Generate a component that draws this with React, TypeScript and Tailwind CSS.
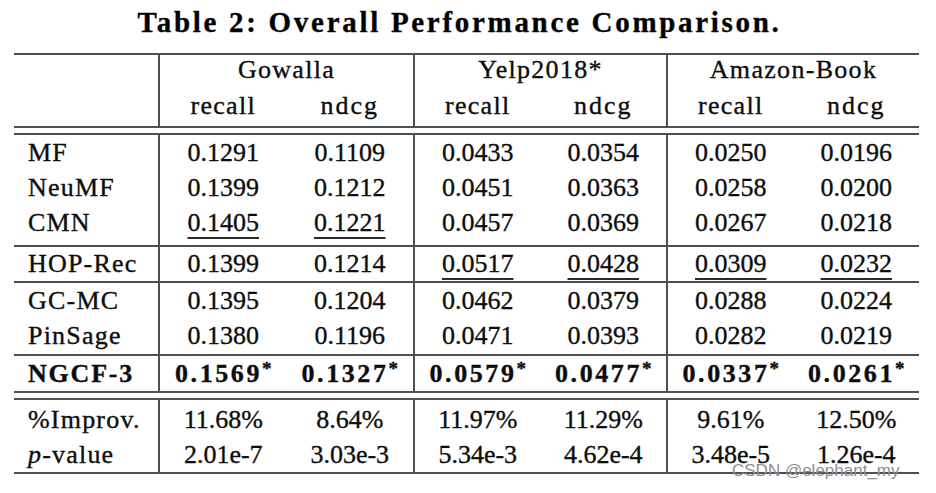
import React from "react";

type Cell = { v: string; u?: boolean };
type Row = { label: React.ReactNode; cells: Cell[]; bold?: boolean };

const c = (...vals: (string | [string, boolean])[]): Cell[] =>
  vals.map((v) => (typeof v === "string" ? { v } : { v: v[0], u: v[1] }));

function HLine() {
  return <div className="h-[2px] bg-[#505050]" />;
}

function Gap() {
  return <div className="h-[5px]" />;
}

function Value({ cell, bold }: { cell: Cell; bold?: boolean }) {
  if (bold) {
    return (
      <span className="font-bold tracking-[2.6px]">
        {cell.v}
        <span className="relative -top-[7px] text-[19px] tracking-normal">*</span>
      </span>
    );
  }
  if (cell.u) {
    return (
      <span className="underline decoration-[2px] decoration-[#2a2a2a] underline-offset-[6px]">
        {cell.v}
      </span>
    );
  }
  return <span>{cell.v}</span>;
}

function Section({
  rows,
  rowClass,
  padClass,
}: {
  rows: Row[];
  rowClass: string;
  padClass: string;
}) {
  const groups = [0, 1, 2];
  const widths = ["w-[255px]", "w-[253px]", "w-[253px]"];
  return (
    <div className="flex">
      <div className={`w-[144px] pl-[14px] ${padClass}`}>
        {rows.map((r, i) => (
          <div
            key={i}
            className={`${rowClass} whitespace-nowrap tracking-[1.2px] ${r.bold ? "font-bold tracking-[1.8px]" : ""}`}
          >
            {r.label}
          </div>
        ))}
      </div>
      {groups.map((g) => (
        <div
          key={g}
          className={`${widths[g]} flex border-l-2 border-[#505050] ${padClass}`}
        >
          {[0, 1].map((s) => (
            <div key={s} className="flex-1 flex flex-col items-center">
              {rows.map((r, i) => (
                <div key={i} className={`${rowClass} whitespace-nowrap`}>
                  <Value cell={r.cells[g * 2 + s]} bold={r.bold} />
                </div>
              ))}
            </div>
          ))}
        </div>
      ))}
    </div>
  );
}

const sec1: Row[] = [
  { label: "MF", cells: c("0.1291", "0.1109", "0.0433", "0.0354", "0.0250", "0.0196") },
  { label: "NeuMF", cells: c("0.1399", "0.1212", "0.0451", "0.0363", "0.0258", "0.0200") },
  {
    label: "CMN",
    cells: c(["0.1405", true], ["0.1221", true], "0.0457", "0.0369", "0.0267", "0.0218"),
  },
];

const sec2: Row[] = [
  {
    label: "HOP-Rec",
    cells: c("0.1399", "0.1214", ["0.0517", true], ["0.0428", true], ["0.0309", true], ["0.0232", true]),
  },
];

const sec3: Row[] = [
  { label: "GC-MC", cells: c("0.1395", "0.1204", "0.0462", "0.0379", "0.0288", "0.0224") },
  { label: "PinSage", cells: c("0.1380", "0.1196", "0.0471", "0.0393", "0.0282", "0.0219") },
];

const sec4: Row[] = [
  {
    label: "NGCF-3",
    bold: true,
    cells: c("0.1569", "0.1327", "0.0579", "0.0477", "0.0337", "0.0261"),
  },
];

const sec5: Row[] = [
  { label: "%Improv.", cells: c("11.68%", "8.64%", "11.97%", "11.29%", "9.61%", "12.50%") },
  {
    label: (
      <>
        <span className="italic">p</span>-value
      </>
    ),
    cells: c("2.01e-7", "3.03e-3", "5.34e-3", "4.62e-4", "3.48e-5", "1.26e-4"),
  },
];

export default function App() {
  const groupNames = [
    { name: "Gowalla", w: "w-[255px]" },
    { name: "Yelp2018*", w: "w-[253px]" },
    { name: "Amazon-Book", w: "w-[253px]" },
  ];
  return (
    <div className="relative w-[936px] h-[493px] bg-white text-[#0d0d0d] font-['Liberation_Serif',serif] text-[26px] overflow-hidden [-webkit-text-stroke:0.35px_#0d0d0d]">
      <div className="ml-[14px] w-[905px] flex flex-col">
        <div className="h-[53px] pt-[2px] pr-[14px] text-center text-[29px] leading-[40px] font-bold tracking-[2.7px] text-black">
          Table 2: Overall Performance Comparison.
        </div>
        <HLine />
        <div className="flex h-[71px]">
          <div className="w-[144px]" />
          {groupNames.map((g) => (
            <div key={g.name} className={`${g.w} border-l-2 border-[#505050] flex flex-col`}>
              <div className="h-[30px] leading-[30px] text-center tracking-[1.3px]">{g.name}</div>
              <div className="flex h-[41px] leading-[41px] tracking-[1.3px]">
                <div className="flex-1 text-center">recall</div>
                <div className="flex-1 text-center tracking-[2px]">ndcg</div>
              </div>
            </div>
          ))}
        </div>
        <HLine />
        <Gap />
        <HLine />
        <Section rows={sec1} rowClass="h-[35px] leading-[35px]" padClass="pb-[5px]" />
        <HLine />
        <Section rows={sec2} rowClass="h-[34px] leading-[34px]" padClass="" />
        <HLine />
        <Section rows={sec3} rowClass="h-[35px] leading-[35px]" padClass="pb-[1px]" />
        <HLine />
        <Section rows={sec4} rowClass="h-[35px] leading-[35px]" padClass="" />
        <HLine />
        <Gap />
        <HLine />
        <Section rows={sec5} rowClass="h-[35px] leading-[35px]" padClass="pt-[2px]" />
        <HLine />
      </div>
      <div className="absolute left-[732px] top-[462px] text-[17px] leading-[17px] font-['Liberation_Sans',sans-serif] text-[#8f8f8f] whitespace-nowrap [-webkit-text-stroke:0px]">
        CSDN @elephant_my
      </div>
    </div>
  );
}
